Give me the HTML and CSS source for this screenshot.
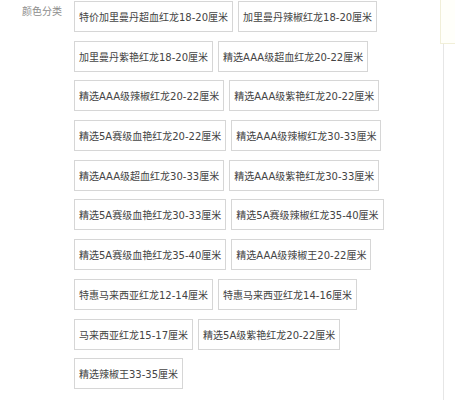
FILE: index.html
```html
<!DOCTYPE html>
<html>
<head>
    <meta charset="utf-8">
    <title>颜色分类</title>
    <link rel="stylesheet" href="styles.css">
</head>
<body>
    <div class="page">
        <div class="sku">
            <div class="sku-label">颜色分类</div>
            <ul class="sku-list">
                <li><a href="#">特价加里曼丹超血红龙18-20厘米</a></li>
                <li><a href="#">加里曼丹辣椒红龙18-20厘米</a></li>
                <li><a href="#">加里曼丹紫艳红龙18-20厘米</a></li>
                <li><a href="#">精选AAA级超血红龙20-22厘米</a></li>
                <li><a href="#">精选AAA级辣椒红龙20-22厘米</a></li>
                <li><a href="#">精选AAA级紫艳红龙20-22厘米</a></li>
                <li><a href="#">精选5A赛级血艳红龙20-22厘米</a></li>
                <li><a href="#">精选AAA级辣椒红龙30-33厘米</a></li>
                <li><a href="#">精选AAA级超血红龙30-33厘米</a></li>
                <li><a href="#">精选AAA级紫艳红龙30-33厘米</a></li>
                <li><a href="#">精选5A赛级血艳红龙30-33厘米</a></li>
                <li><a href="#">精选5A赛级辣椒红龙35-40厘米</a></li>
                <li><a href="#">精选5A赛级血艳红龙35-40厘米</a></li>
                <li><a href="#">精选AAA级辣椒王20-22厘米</a></li>
                <li><a href="#">特惠马来西亚红龙12-14厘米</a></li>
                <li><a href="#">特惠马来西亚红龙14-16厘米</a></li>
                <li><a href="#">马来西亚红龙15-17厘米</a></li>
                <li><a href="#">精选5A级紫艳红龙20-22厘米</a></li>
                <li><a href="#">精选辣椒王33-35厘米</a></li>
            </ul>
        </div>
        <div class="side">
            <div class="side-note"></div>
        </div>
    </div>
</body>
</html>
```

FILE: styles.css
```css
html, body {
    margin: 0;
    padding: 0;
    background-color: #fff;
}

body {
    font-family: "DejaVu Sans", "Noto Sans CJK SC", sans-serif;
    font-size: 10px;
    color: #444;
}

.page {
    display: flex;
    height: 400px;
}

.sku {
    display: flex;
    width: 441px;
}

.sku-label {
    width: 41px;
    padding: 6px 11px 0 22px;
    color: #8c8c8c;
    line-height: 12px;
    white-space: nowrap;
}

.sku-list {
    display: flex;
    flex-wrap: wrap;
    align-content: flex-start;
    gap: 8.7px 5px;
    width: 367px;
    margin: 0;
    padding: 1px 0 0;
    list-style: none;
}

.sku-list a {
    display: block;
    height: 29px;
    padding: 0 4px;
    line-height: 31px;
    border: 1px solid #d6d6d6;
    color: #444;
    text-decoration: none;
    white-space: nowrap;
}

.sku-list a:hover {
    border-color: #f40;
}

.side {
    flex: 1;
    border-left: 1px solid #e6e6e6;
    margin-left: 2px;
}

.side-note {
    height: 43px;
    margin-left: -4px;
    border-left: 1px solid #f1efd8;
    border-bottom: 1px solid #f1efd8;
    background-color: #fffffa;
}
```
